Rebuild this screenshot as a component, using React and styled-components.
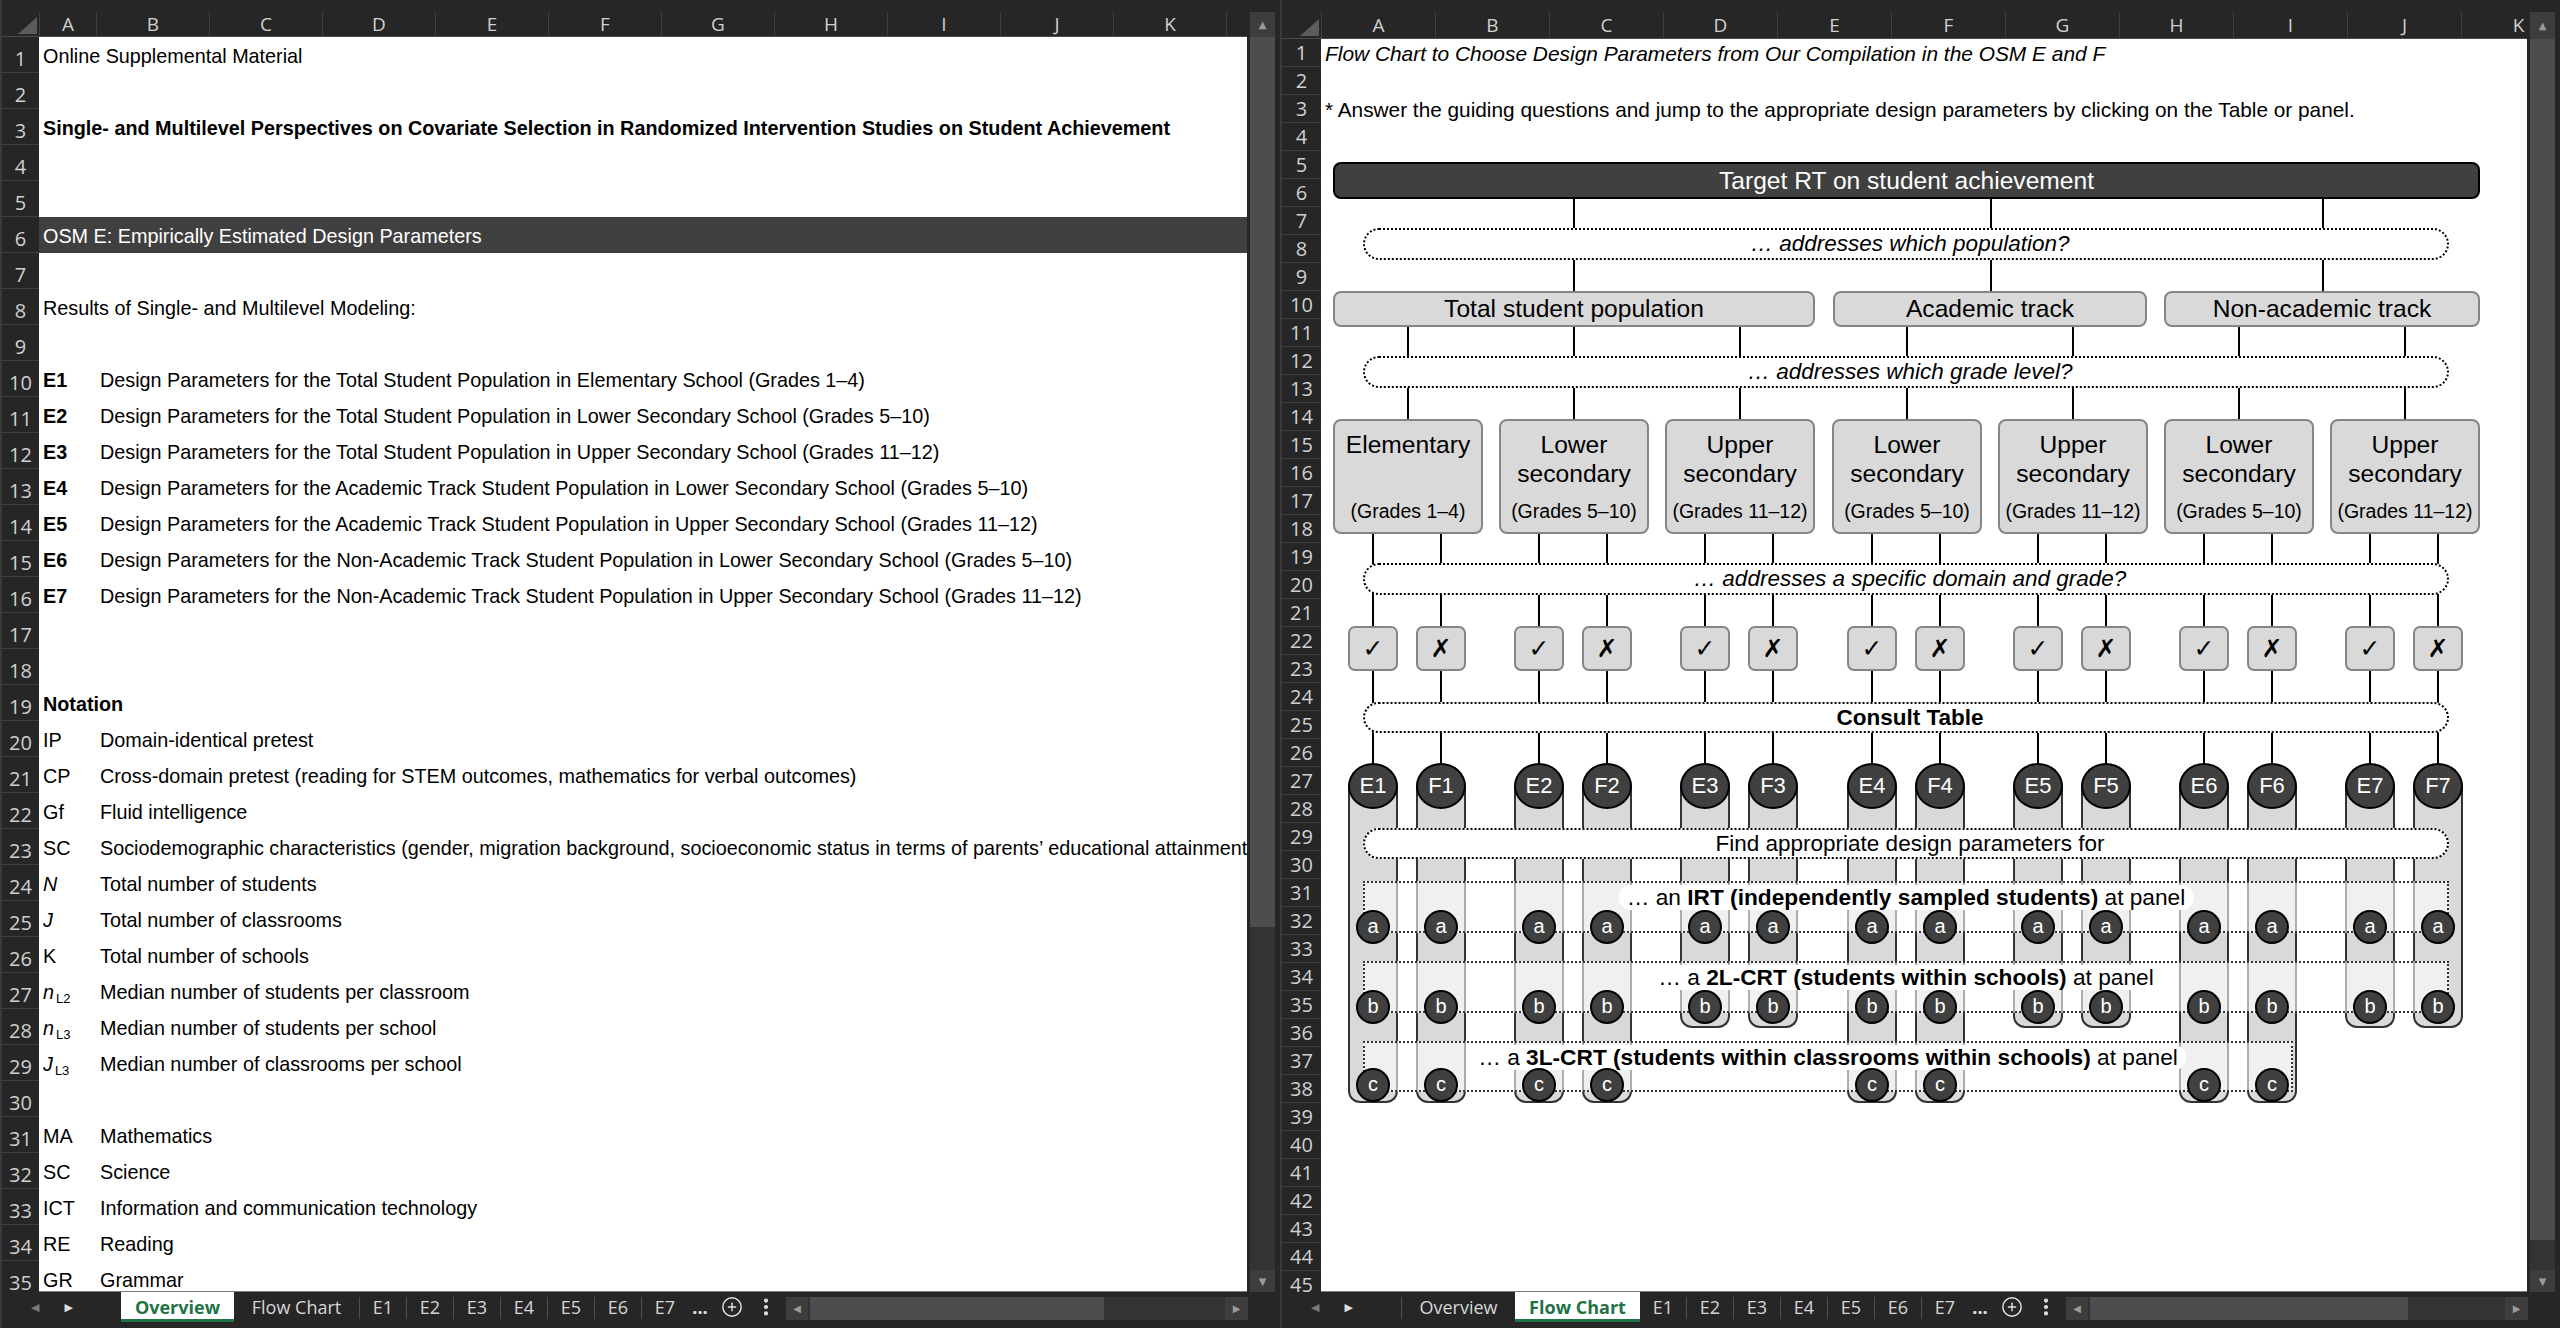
import React from 'react';
import styled, { createGlobalStyle, css } from 'styled-components';
import { CirclePlus, EllipsisVertical } from 'lucide-react';

const SHEET_FONT = `"Liberation Sans", Arial, sans-serif`;
const UI_FONT = `"Open Sans", "Noto Sans", sans-serif`;

const GlobalStyle = createGlobalStyle`
  html, body {
    margin: 0;
    padding: 0;
    background: #262626;
    overflow: hidden;
  }
  #root {
    width: 2560px;
    height: 1328px;
  }
`;

const Desktop = styled.div`
  display: flex;
  width: 2560px;
  height: 1328px;
  background: #262626;
`;

/* ---------- workbook chrome ---------- */

const Pane = styled.section`
  width: 1280px;
  height: 1328px;
  box-sizing: border-box;
  border-left: 2px solid #3a3a3a;
  display: flex;
  flex-direction: column;
  background: #262626;
`;

const TopStrip = styled.div`
  height: 12px;
  flex-shrink: 0;
`;

const Main = styled.div`
  flex: 1;
  min-height: 0;
  display: flex;
`;

const Sheet = styled.div`
  flex: 1;
  min-width: 0;
  display: flex;
  flex-direction: column;
`;

const ColHeader = styled.div`
  height: ${p => p.$h}px;
  flex-shrink: 0;
  display: flex;
  overflow: hidden;
  border-bottom: 1px solid #4a4a4a;
  box-sizing: border-box;
`;

const Corner = styled.div`
  width: ${p => p.$w}px;
  flex-shrink: 0;
  position: relative;
`;

const SelectAll = styled.span`
  position: absolute;
  right: 2px;
  bottom: 2px;
  width: 0;
  height: 0;
  border-style: solid;
  border-width: 0 0 17px 19px;
  border-color: transparent transparent #5c5c5c transparent;
`;

const ColLabel = styled.div`
  width: ${p => p.$w}px;
  flex-shrink: 0;
  box-sizing: border-box;
  border-left: 1px solid #3f3f3f;
  display: flex;
  align-items: center;
  justify-content: center;
  color: #d0d0d0;
  font: 19px ${UI_FONT};
`;

const Body = styled.div`
  flex: 1;
  min-height: 0;
  display: flex;
`;

const RowHeader = styled.div`
  width: ${p => p.$w}px;
  flex-shrink: 0;
  overflow: hidden;
  display: flex;
  flex-direction: column;
`;

const RowNum = styled.div`
  height: ${p => p.$h}px;
  flex-shrink: 0;
  box-sizing: border-box;
  border-bottom: 1px solid #3f3f3f;
  display: flex;
  align-items: flex-end;
  justify-content: center;
  padding-bottom: 3px;
  color: #d0d0d0;
  font: 20px/20px ${UI_FONT};
`;

const Cells = styled.div`
  flex: 1;
  min-width: 0;
  position: relative;
  overflow: hidden;
  background: #fff;
  border-bottom: 1px solid #7d7d7d;
  display: flex;
  flex-direction: column;
`;

const VScroll = styled.div`
  width: 25px;
  flex-shrink: 0;
  margin: 0 5px 0 3px;
  display: flex;
  flex-direction: column;
  background: #333;
`;

const ScrollBtn = styled.div`
  height: ${p => p.$h}px;
  width: ${p => (p.$w ? `${p.$w}px` : 'auto')};
  flex-shrink: 0;
  display: flex;
  align-items: center;
  justify-content: center;
  background: #3d3d3d;
  color: #9a9a9a;
  font: 10px "DejaVu Sans", sans-serif;
`;

const VThumb = styled.div`
  height: ${p => p.$h}px;
  flex-shrink: 0;
  background: #4d4d4d;
`;

const Track = styled.div`
  flex: 1;
`;

/* ---------- sheet tabs ---------- */

const TabBar = styled.nav`
  height: 36px;
  flex-shrink: 0;
  display: flex;
  align-items: flex-start;
  font: 18px ${UI_FONT};
  color: #d6d6d6;
`;

const NavArea = styled.div`
  width: 119px;
  height: 30px;
  flex-shrink: 0;
  box-sizing: border-box;
  padding-left: 29px;
  display: flex;
  align-items: center;
  gap: 25px;
`;

const NavArrow = styled.span`
  font: 11px "DejaVu Sans", sans-serif;
  color: ${p => (p.$dim ? '#7a7a7a' : '#dcdcdc')};
`;

const Tab = styled.div`
  width: ${p => p.$w}px;
  height: 30px;
  flex-shrink: 0;
  box-sizing: border-box;
  display: flex;
  align-items: center;
  justify-content: center;
  white-space: nowrap;
  ${p =>
    p.$active &&
    css`
      background: #fff;
      color: #217346;
      font-weight: 700;
      border-bottom: 3px solid #217346;
      padding-top: 2px;
    `}
`;

const TabSep = styled.span`
  width: 1px;
  height: 22px;
  margin-top: 5px;
  flex-shrink: 0;
  background: #4f4f4f;
`;

const IconSlot = styled.div`
  width: ${p => p.$w}px;
  height: 30px;
  flex-shrink: 0;
  display: flex;
  align-items: center;
  justify-content: center;
  font-weight: 700;
  color: #e0e0e0;
`;

const HScroll = styled.div`
  flex: 1;
  height: 23px;
  margin: 5px 32px 0 6px;
  display: flex;
  background: #333;
`;

const HThumb = styled.div`
  width: ${p => p.$w}px;
  margin-left: 2px;
  flex-shrink: 0;
  background: #4d4d4d;
`;

/* ---------- sheet content ---------- */

const SheetRow = styled.div`
  height: ${p => p.$h}px;
  flex-shrink: 0;
  box-sizing: border-box;
  padding-bottom: ${p => p.$pb}px;
  display: grid;
  grid-template-columns: ${p => p.$a}px 1fr;
  align-items: end;
  white-space: nowrap;
  font-family: ${SHEET_FONT};
  font-size: ${p => p.$fs}px;
  line-height: 22px;
  color: ${p => (p.$band ? '#fff' : '#000')};
  background: ${p => (p.$band ? '#404040' : 'transparent')};
`;

const Cell = styled.div`
  padding-left: 4px;
  font-weight: ${p => (p.$bold ? 700 : 400)};
  font-style: ${p => (p.$italic ? 'italic' : 'normal')};
  ${p => p.$span && 'grid-column: 1 / -1;'}
`;

const Sym = styled.span`
  font-style: italic;
`;

const Sub = styled.sub`
  font-size: 13px;
  line-height: 0;
  vertical-align: -4px;
  margin-left: 2px;
`;

/* ---------- flow chart ---------- */

const Canvas = styled.div`
  position: absolute;
  left: ${p => p.$x}px;
  top: ${p => p.$y}px;
  width: 1147px;
  height: 945px;
  font-family: ${SHEET_FONT};
  color: #000;
`;

const Wires = styled.svg`
  position: absolute;
  left: 0;
  top: 0;
`;

const Node = styled.div`
  position: absolute;
  left: ${p => p.$x}px;
  top: ${p => p.$y}px;
  width: ${p => p.$w}px;
  height: ${p => p.$h}px;
  box-sizing: border-box;
  z-index: 2;
`;

const TargetBox = styled(Node)`
  background: #404040;
  border: 2px solid #000;
  border-radius: 8px;
  color: #fff;
  font-size: 24.6px;
  display: flex;
  align-items: center;
  justify-content: center;
`;

const GrayBox = styled(Node)`
  background: #d9d9d9;
  border: 2px solid #858585;
  border-radius: 8px;
  font-size: 24.6px;
  display: flex;
  align-items: center;
  justify-content: center;
`;

const GradeBox = styled(Node)`
  background: #d9d9d9;
  border: 2px solid #858585;
  border-radius: 8px;
  padding: 9px 0 10px;
  display: flex;
  flex-direction: column;
  justify-content: space-between;
  align-items: center;
  text-align: center;
`;

const GradeTitle = styled.div`
  font-size: 24.6px;
  line-height: 29px;
`;

const GradeRange = styled.div`
  font-size: 19.5px;
  line-height: 22px;
  white-space: nowrap;
`;

const Pill = styled(Node)`
  background: #fff;
  border: 2px dotted #000;
  border-radius: 16px;
  font-size: 22.5px;
  font-style: ${p => (p.$italic ? 'italic' : 'normal')};
  font-weight: ${p => (p.$bold ? 700 : 400)};
  display: flex;
  align-items: center;
  justify-content: center;
  padding-left: 8px;
`;

const ChoiceBox = styled(Node)`
  background: #d9d9d9;
  border: 2px solid #858585;
  border-radius: 7px;
  font: 25px "DejaVu Sans", sans-serif;
  display: flex;
  align-items: center;
  justify-content: center;
`;

const Capsule = styled(Node)`
  z-index: 1;
  background: #d9d9d9;
  border: 2px solid #333;
  border-top: none;
  border-radius: 0 0 12px 12px;
`;

const CodeCircle = styled(Node)`
  z-index: 3;
  background: #404040;
  border: 2px solid #000;
  border-radius: 50%;
  color: #fff;
  font-size: 22px;
  display: flex;
  align-items: center;
  justify-content: center;
`;

const Badge = styled(Node)`
  z-index: 3;
  width: 34px;
  height: 34px;
  background: #404040;
  border: 2px solid #000;
  border-radius: 50%;
  color: #fff;
  font-size: 20px;
  display: flex;
  align-items: center;
  justify-content: center;
  padding-bottom: 2px;
`;

const Panel = styled(Node)`
  border: 2px dotted #333;
  background: rgba(255, 255, 255, 0.6);
`;

const PanelLabel = styled.div`
  position: absolute;
  top: 2px;
  left: 50%;
  transform: translateX(-50%);
  padding: 0 8px;
  border-radius: 12px;
  background: #fff;
  font-size: 22.7px;
  line-height: 25px;
  white-space: nowrap;
`;

/* ---------- data ---------- */

const LEFT_COLS = [['A', 57], ...'BCDEFGHIJKL'.split('').map(l => [l, 113])];
const RIGHT_COLS = 'ABCDEFGHIJKL'.split('').map(l => [l, 114]);

const E_ROWS = [
  'Design Parameters for the Total Student Population in Elementary School (Grades 1–4)',
  'Design Parameters for the Total Student Population in Lower Secondary School (Grades 5–10)',
  'Design Parameters for the Total Student Population in Upper Secondary School (Grades 11–12)',
  'Design Parameters for the Academic Track Student Population in Lower Secondary School (Grades 5–10)',
  'Design Parameters for the Academic Track Student Population in Upper Secondary School (Grades 11–12)',
  'Design Parameters for the Non-Academic Track Student Population in Lower Secondary School (Grades 5–10)',
  'Design Parameters for the Non-Academic Track Student Population in Upper Secondary School (Grades 11–12)',
];

const LEFT_ROWS = [
  { text: 'Online Supplemental Material' },
  {},
  {
    text: 'Single- and Multilevel Perspectives on Covariate Selection in Randomized Intervention Studies on Student Achievement',
    bold: true,
  },
  {},
  {},
  { text: 'OSM E: Empirically Estimated Design Parameters', band: true },
  {},
  { text: 'Results of Single- and Multilevel Modeling:' },
  {},
  ...E_ROWS.map((b, i) => ({ a: `E${i + 1}`, aBold: true, b })),
  {},
  {},
  { text: 'Notation', bold: true },
  { a: 'IP', b: 'Domain-identical pretest' },
  { a: 'CP', b: 'Cross-domain pretest (reading for STEM outcomes, mathematics for verbal outcomes)' },
  { a: 'Gf', b: 'Fluid intelligence' },
  {
    a: 'SC',
    b: 'Sociodemographic characteristics (gender, migration background, socioeconomic status in terms of parents’ educational attainment)',
  },
  { a: <Sym>N</Sym>, b: 'Total number of students' },
  { a: <Sym>J</Sym>, b: 'Total number of classrooms' },
  { a: 'K', b: 'Total number of schools' },
  { a: <><Sym>n</Sym><Sub>L2</Sub></>, b: 'Median number of students per classroom' },
  { a: <><Sym>n</Sym><Sub>L3</Sub></>, b: 'Median number of students per school' },
  { a: <><Sym>J</Sym><Sub>L3</Sub></>, b: 'Median number of classrooms per school' },
  {},
  { a: 'MA', b: 'Mathematics' },
  { a: 'SC', b: 'Science' },
  { a: 'ICT', b: 'Information and communication technology' },
  { a: 'RE', b: 'Reading' },
  { a: 'GR', b: 'Grammar' },
];

const TABS = ['Overview', 'Flow Chart', 'E1', 'E2', 'E3', 'E4', 'E5', 'E6', 'E7'];
const TAB_W = { Overview: 113, 'Flow Chart': 125 };

const GX = [0, 166, 332, 499, 665, 831, 997];

const GRADES = [
  { title: ['Elementary'], range: '(Grades 1–4)', depth: 'c' },
  { title: ['Lower', 'secondary'], range: '(Grades 5–10)', depth: 'c' },
  { title: ['Upper', 'secondary'], range: '(Grades 11–12)', depth: 'b' },
  { title: ['Lower', 'secondary'], range: '(Grades 5–10)', depth: 'c' },
  { title: ['Upper', 'secondary'], range: '(Grades 11–12)', depth: 'b' },
  { title: ['Lower', 'secondary'], range: '(Grades 5–10)', depth: 'c' },
  { title: ['Upper', 'secondary'], range: '(Grades 11–12)', depth: 'b' },
];

const POPS = [
  { label: 'Total student population', x: 0, w: 482, cx: 241 },
  { label: 'Academic track', x: 500, w: 314, cx: 658 },
  { label: 'Non-academic track', x: 831, w: 316, cx: 990 },
];

const PILLS = [
  { y: 66, h: 32, text: '… addresses which population?', italic: true },
  { y: 194, h: 32, text: '… addresses which grade level?', italic: true },
  { y: 401, h: 32, text: '… addresses a specific domain and grade?', italic: true },
  { y: 540, h: 31, text: 'Consult Table', bold: true },
  { y: 666, h: 31, text: 'Find appropriate design parameters for' },
];

const CODES = GRADES.flatMap((g, k) => [
  { code: `E${k + 1}`, cx: GX[k] + 40, ok: true, depth: g.depth },
  { code: `F${k + 1}`, cx: GX[k] + 108, ok: false, depth: g.depth },
]);

const BADGE_Y = { a: 748, b: 828, c: 906 };
const CAPSULE_END = { b: 866, c: 941 };

const PANELS = [
  { y: 719, h: 52, w: 1086, pre: '… an ', strong: 'IRT (independently sampled students)' },
  { y: 799, h: 52, w: 1086, pre: '… a ', strong: '2L-CRT (students within schools)' },
  { y: 879, h: 51, w: 930, pre: '… a ', strong: '3L-CRT (students within classrooms within schools)' },
];

/* ---------- components ---------- */

function SheetTabs({ active, hThumb }) {
  return (
    <TabBar>
      <NavArea>
        <NavArrow $dim>◀</NavArrow>
        <NavArrow>▶</NavArrow>
      </NavArea>
      {TABS.map((t, i) => {
        const sep = i !== active && i - 1 !== active;
        return (
          <React.Fragment key={t}>
            {sep && <TabSep />}
            <Tab $w={TAB_W[t] || 46} $active={i === active}>{t}</Tab>
          </React.Fragment>
        );
      })}
      <IconSlot $w={24}>...</IconSlot>
      <IconSlot $w={40}>
        <CirclePlus size={22} strokeWidth={1.6} color="#e0e0e0" />
      </IconSlot>
      <IconSlot $w={28}>
        <EllipsisVertical size={22} strokeWidth={2.6} color="#e0e0e0" />
      </IconSlot>
      <HScroll>
        <ScrollBtn $h={23} $w={22}>◀</ScrollBtn>
        <HThumb $w={hThumb} />
        <Track />
        <ScrollBtn $h={23} $w={23}>▶</ScrollBtn>
      </HScroll>
    </TabBar>
  );
}

function Workbook({ cols, rowHead, colHead, rowH, rowCount, vThumb, hThumb, active, children }) {
  return (
    <Pane>
      <TopStrip />
      <Main>
        <Sheet>
          <ColHeader $h={colHead}>
            <Corner $w={rowHead}>
              <SelectAll />
            </Corner>
            {cols.map(([l, w]) => (
              <ColLabel key={l} $w={w}>{l}</ColLabel>
            ))}
          </ColHeader>
          <Body>
            <RowHeader $w={rowHead}>
              {Array.from({ length: rowCount }, (_, i) => (
                <RowNum key={i} $h={rowH}>{i + 1}</RowNum>
              ))}
            </RowHeader>
            <Cells>{children}</Cells>
          </Body>
        </Sheet>
        <VScroll>
          <ScrollBtn $h={colHead}>▲</ScrollBtn>
          <VThumb $h={vThumb} />
          <Track />
          <ScrollBtn $h={22}>▼</ScrollBtn>
        </VScroll>
      </Main>
      <SheetTabs active={active} hThumb={hThumb} />
    </Pane>
  );
}

function FlowChart() {
  const lines = [
    ...POPS.map(p => [p.cx, 36, 130]),
    ...GX.map(x => [x + 75, 164, 258]),
    ...CODES.map(c => [c.cx, 371, 465]),
    ...CODES.map(c => [c.cx, 508, 602]),
  ];

  return (
    <Canvas $x={12} $y={123}>
      <Wires width="1147" height="945">
        {lines.map(([x, y1, y2], i) => (
          <line key={i} x1={x} x2={x} y1={y1} y2={y2} stroke="#000" strokeWidth="2" />
        ))}
      </Wires>

      <TargetBox $x={0} $y={0} $w={1147} $h={37}>Target RT on student achievement</TargetBox>

      {POPS.map(p => (
        <GrayBox key={p.label} $x={p.x} $y={129} $w={p.w} $h={36}>{p.label}</GrayBox>
      ))}

      {PILLS.map(p => (
        <Pill key={p.text} $x={30} $y={p.y} $w={1086} $h={p.h} $italic={p.italic} $bold={p.bold}>
          {p.text}
        </Pill>
      ))}

      {GRADES.map((g, k) => (
        <GradeBox key={k} $x={GX[k]} $y={257} $w={150} $h={115}>
          <GradeTitle>
            {g.title.map(t => (
              <div key={t}>{t}</div>
            ))}
          </GradeTitle>
          <GradeRange>{g.range}</GradeRange>
        </GradeBox>
      ))}

      {CODES.map(c => (
        <ChoiceBox key={`ch-${c.code}`} $x={c.cx - 25} $y={464} $w={50} $h={45}>
          {c.ok ? '✓' : '✗'}
        </ChoiceBox>
      ))}

      {CODES.map(c => (
        <Capsule key={`cap-${c.code}`} $x={c.cx - 25} $y={624} $w={50} $h={CAPSULE_END[c.depth] - 624} />
      ))}

      {CODES.map(c => (
        <CodeCircle key={`code-${c.code}`} $x={c.cx - 25} $y={601} $w={50} $h={46}>
          {c.code}
        </CodeCircle>
      ))}

      {PANELS.map(p => (
        <Panel key={p.strong} $x={30} $y={p.y} $w={p.w} $h={p.h}>
          <PanelLabel>
            {p.pre}
            <b>{p.strong}</b> at panel
          </PanelLabel>
        </Panel>
      ))}

      {CODES.flatMap(c =>
        (c.depth === 'c' ? ['a', 'b', 'c'] : ['a', 'b']).map(l => (
          <Badge key={`${c.code}-${l}`} $x={c.cx - 17} $y={BADGE_Y[l]}>
            {l}
          </Badge>
        ))
      )}
    </Canvas>
  );
}

export default function App() {
  return (
    <>
      <GlobalStyle />
      <Desktop>
        <Workbook
          cols={LEFT_COLS}
          rowHead={37}
          colHead={25}
          rowH={36}
          rowCount={35}
          vThumb={890}
          hThumb={294}
          active={0}
        >
          {LEFT_ROWS.map((r, i) => (
            <SheetRow key={i} $h={36} $pb={6} $a={57} $fs={19.8} $band={r.band}>
              {r.text && (
                <Cell $span $bold={r.bold}>
                  {r.text}
                </Cell>
              )}
              {r.a && <Cell $bold={r.aBold}>{r.a}</Cell>}
              {r.b && <Cell>{r.b}</Cell>}
            </SheetRow>
          ))}
        </Workbook>

        <Workbook
          cols={RIGHT_COLS}
          rowHead={39}
          colHead={27}
          rowH={28}
          rowCount={45}
          vThumb={1201}
          hThumb={318}
          active={1}
        >
          <SheetRow $h={28} $pb={2} $a={114} $fs={20.9}>
            <Cell $span $italic>
              Flow Chart to Choose Design Parameters from Our Compilation in the OSM E and F
            </Cell>
          </SheetRow>
          <SheetRow $h={28} $pb={2} $a={114} $fs={20.8} />
          <SheetRow $h={28} $pb={2} $a={114} $fs={20.8}>
            <Cell $span>
              * Answer the guiding questions and jump to the appropriate design parameters by clicking on the Table or panel.
            </Cell>
          </SheetRow>
          <FlowChart />
        </Workbook>
      </Desktop>
    </>
  );
}
